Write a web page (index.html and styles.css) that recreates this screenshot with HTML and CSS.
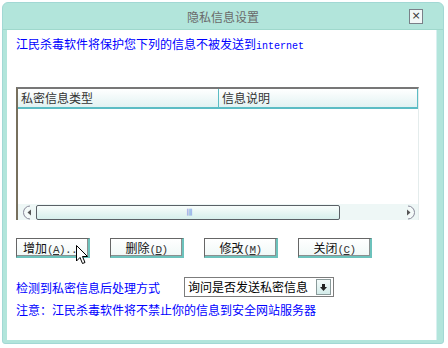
FILE: index.html
```html
<!DOCTYPE html>
<html lang="zh">
<head>
    <meta charset="UTF-8">
    <title>隐私信息设置</title>
    <link rel="stylesheet" href="styles.css">
</head>
<body>

    <div class="window">
        <div class="titlebar">
            <span></span>
            <span class="title">隐私信息设置</span>
            <span class="close-btn">×</span>
        </div>

        <div class="content">
            <p class="intro">江民杀毒软件将保护您下列的信息不被发送到<span class="mono">internet</span></p>

            <div class="list">
                <div class="list-head">
                    <div class="col col-type">私密信息类型</div>
                    <div class="col col-desc">信息说明</div>
                </div>
                <div class="list-body"></div>
                <div class="hscroll">
                    <span class="arrow-btn">
                        <svg width="13" height="15" viewBox="0 0 13 15"><path d="M7 1 A6.5 6.5 0 0 0 7 14" fill="#f4faf9" stroke="#889" stroke-width="1"/><path d="M8 4.5 L4.5 7.5 L8 10.5 Z" fill="#555"/></svg>
                    </span>
                    <span class="thumb"><span class="grip">||||</span></span>
                    <span class="track"></span>
                    <span class="arrow-btn">
                        <svg width="13" height="15" viewBox="0 0 13 15"><path d="M6 1 A6.5 6.5 0 0 1 6 14" fill="#f4faf9" stroke="#889" stroke-width="1"/><path d="M5 4.5 L8.5 7.5 L5 10.5 Z" fill="#555"/></svg>
                    </span>
                </div>
            </div>

            <div class="btn-row">
                <button class="btn btn-add">增加<span class="mono">(<u>A</u>)...</span></button>
                <button class="btn">删除<span class="mono">(<u>D</u>)</span></button>
                <button class="btn">修改<span class="mono">(<u>M</u>)</span></button>
                <button class="btn">关闭<span class="mono">(<u>C</u>)</span></button>
            </div>

            <div class="action-row">
                <span class="blue">检测到私密信息后处理方式</span>
                <div class="select">
                    <span class="select-text">询问是否发送私密信息</span>
                    <span class="drop-btn">
                        <svg width="9" height="9" viewBox="0 0 9 9"><path d="M3 1 H6 V4 H8 L4.5 8 L1 4 H3 Z" fill="#222"/></svg>
                    </span>
                </div>
            </div>

            <p class="blue note">注意：江民杀毒软件将不禁止你的信息到安全网站服务器</p>

            <svg class="cursor" width="13" height="21" viewBox="0 0 13 21">
                <path d="M0.5 0.5 L0.5 16 L4 12.5 L6.5 18.5 L9 17.5 L6.5 11.5 L11.5 11.5 Z" fill="#fff" stroke="#000" stroke-width="1" stroke-linejoin="miter"/>
            </svg>
        </div>
    </div>

</body>
</html>
```

FILE: styles.css
```css
body {
    margin: 0;
    padding: 0;
    background: #ffffff;
    font-family: "Noto Sans CJK SC", sans-serif;
    font-size: 12px;
}

.window {
    margin: 2px;
    width: 440px;
    height: 340px;
    background: #b2e5db;
    border: 1px solid #a2d8d4;
    border-radius: 6px 6px 3px 3px;
    display: flex;
    flex-direction: column;
}

.titlebar {
    height: 26px;
    display: grid;
    grid-template-columns: 1fr auto 1fr;
    align-items: center;
    border-bottom: 1px solid #9fd8cc;
}

.title {
    color: #6a6a6a;
    font-size: 12px;
    padding-top: 1px;
}

.close-btn {
    justify-self: end;
    margin-right: 20px;
    margin-top: 1px;
    width: 12px;
    height: 13px;
    border: 1px solid #7a8088;
    background: #f2f8f7;
    color: #333;
    font-family: "DejaVu Sans", sans-serif;
    font-size: 11px;
    line-height: 12px;
    text-align: center;
}

.content {
    position: relative;
    flex: 1;
    margin: 0 6px 3px 4px;
    padding: 0 0 0 9px;
    background: #ffffff;
    border-right: 1px solid #d8f0f0;
}

p {
    margin: 0;
}

.intro {
    margin-top: 6px;
    color: #0000ff;
    line-height: 16px;
}

.mono {
    font-family: "Liberation Mono", monospace;
    font-size: 10px;
}

.blue {
    color: #0000ff;
}

.list {
    margin-top: 32px;
    width: 400px;
    border-top: 2px solid #777777;
    border-left: 2px solid #77705e;
    border-right: 1px solid #e4ecec;
    background: #ffffff;
}

.list-head {
    display: flex;
    height: 18px;
    background: linear-gradient(#ffffff, #e2f2f2);
    border-bottom: 2px solid #5cbcc4;
    border-right: 1px solid #5cbcc4;
    color: #333333;
    line-height: 18px;
}

.col {
    padding-left: 3px;
}

.col-type {
    width: 197px;
    border-right: 1px solid #5cbcc4;
}

.list-body {
    height: 95px;
}

.hscroll {
    display: flex;
    align-items: center;
    height: 16px;
    padding: 0 3px 0 5px;
    background: #eef7f6;
}

.arrow-btn {
    display: flex;
}

.thumb {
    width: 302px;
    height: 13px;
    border: 1px solid #5a6066;
    border-radius: 2px;
    background: linear-gradient(#f8fdfc, #d6efec);
    display: flex;
    justify-content: center;
    align-items: center;
}

.grip {
    color: #6688dd;
    font-family: "DejaVu Sans", sans-serif;
    font-size: 7px;
    letter-spacing: -1px;
    margin-left: 2px;
}

.track {
    flex: 1;
}

.btn-row {
    margin-top: 18px;
    display: flex;
    gap: 20px;
}

.btn {
    width: 74px;
    height: 20px;
    padding: 0;
    font-family: "Noto Sans CJK SC", sans-serif;
    font-size: 12px;
    color: #111111;
    background: linear-gradient(#ffffff, #f0f8f7);
    border-top: 1px solid #666666;
    border-left: 1px solid #666666;
    border-right: 2px solid #6cc2bc;
    border-bottom: 2px solid #6cc2bc;
    box-shadow: inset -1px -1px 0 #8a9090;
}

.btn .mono {
    font-size: 11px;
    letter-spacing: -0.6px;
    color: #333333;
}

.btn-add {
    padding-left: 6px;
    text-align: left;
}

.action-row {
    margin-top: 19px;
    display: flex;
    align-items: center;
    gap: 24px;
}

.select {
    width: 148px;
    height: 18px;
    border: 1px solid #7c7c7c;
    background: #ffffff;
    display: flex;
    align-items: center;
    justify-content: space-between;
}

.select-text {
    padding-left: 3px;
    color: #000000;
    line-height: 18px;
}

.drop-btn {
    width: 13px;
    height: 14px;
    margin-right: 2px;
    border: 1px solid #8a9a9a;
    background: linear-gradient(#f4fbfa, #d4ecea);
    display: flex;
    align-items: center;
    justify-content: center;
}

.note {
    margin-top: 5px;
    line-height: 16px;
}

.cursor {
    position: absolute;
    left: 69px;
    top: 215px;
}
```
